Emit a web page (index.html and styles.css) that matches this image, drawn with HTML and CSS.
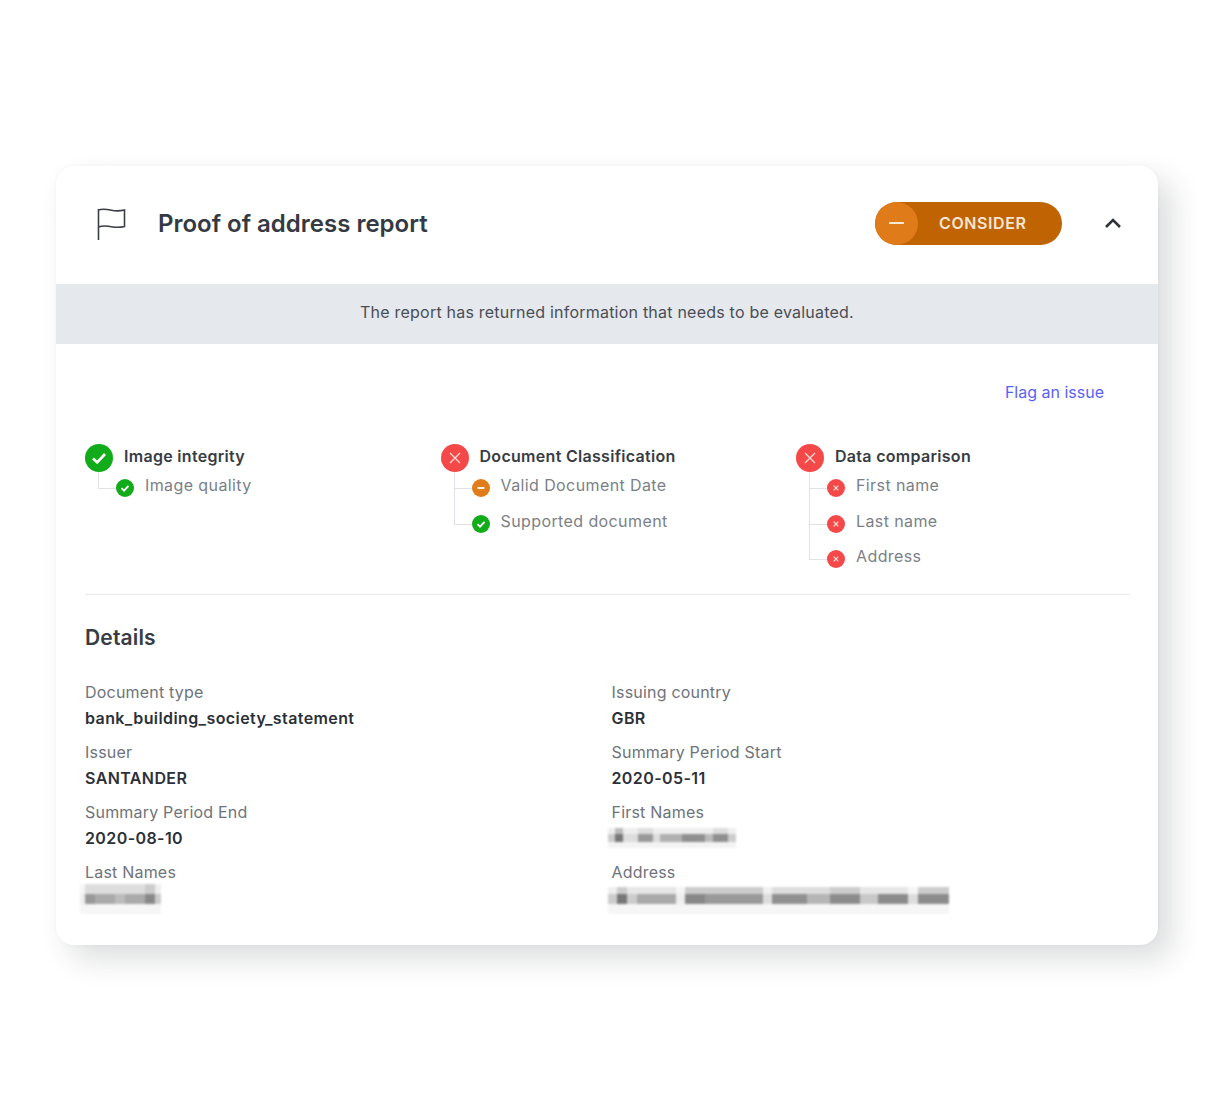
FILE: index.html
```html
<!DOCTYPE html>
<html lang="en">
<head>
<meta charset="utf-8">
<title>Proof of address report</title>
<link rel="stylesheet" href="styles.css">
</head>
<body>
<main class="card">
  <header class="card-header">
    <svg class="flag" viewBox="0 0 30 32" aria-hidden="true"><path d="M1.5 1v31M1.5 2c4-1.4 8-.8 13 .3 4 .8 8 .8 13-.3v16.500c-5 1.200-9 1-13 .2-5-1-9-1.300-13 .3"/></svg>
    <h1 class="title">Proof of address report</h1>
    <div class="status">
      <span class="status-knob"><span class="status-dash"></span></span>
      <span class="status-text">CONSIDER</span>
    </div>
    <svg class="chevron" viewBox="0 0 18 12" aria-hidden="true"><path d="M2 10l7-7 7 7"/></svg>
  </header>
  <div class="banner">The report has returned information that needs to be evaluated.</div>
  <section class="body">
    <div class="flag-row"><a class="flag-link">Flag an issue</a></div>
    <div class="checks">
      <div class="check">
        <div class="check-head">
          <svg class="icon-lg" viewBox="0 0 28 28"><circle class="fill-green" cx="14" cy="14" r="14"/><path class="mark-bold" d="M8 14.500l4.200 4L20 10"/></svg>
          <span class="check-title">Image integrity</span>
        </div>
        <ul class="sub-list">
          <li class="sub"><svg class="icon-sm" viewBox="0 0 18 18"><circle class="fill-green" cx="9" cy="9" r="9"/><path class="mark" d="M5.500 9.200l2.500 2.400 4.500-4.800"/></svg><span>Image quality</span></li>
        </ul>
      </div>
      <div class="check">
        <div class="check-head">
          <svg class="icon-lg" viewBox="0 0 28 28"><circle class="fill-red" cx="14" cy="14" r="14"/><path class="mark-thin" d="M9 9l10 10M19 9L9 19"/></svg>
          <span class="check-title">Document Classification</span>
        </div>
        <ul class="sub-list">
          <li class="sub"><svg class="icon-sm" viewBox="0 0 18 18"><circle class="fill-orange" cx="9" cy="9" r="9"/><path class="mark" d="M5.500 9h7"/></svg><span>Valid Document Date</span></li>
          <li class="sub"><svg class="icon-sm" viewBox="0 0 18 18"><circle class="fill-green" cx="9" cy="9" r="9"/><path class="mark" d="M5.500 9.200l2.500 2.400 4.500-4.800"/></svg><span>Supported document</span></li>
        </ul>
      </div>
      <div class="check">
        <div class="check-head">
          <svg class="icon-lg" viewBox="0 0 28 28"><circle class="fill-red" cx="14" cy="14" r="14"/><path class="mark-thin" d="M9 9l10 10M19 9L9 19"/></svg>
          <span class="check-title">Data comparison</span>
        </div>
        <ul class="sub-list">
          <li class="sub"><svg class="icon-sm" viewBox="0 0 18 18"><circle class="fill-red" cx="9" cy="9" r="9"/><path class="mark-x" d="M6.700 6.700l4.600 4.600M11.300 6.700l-4.600 4.600"/></svg><span>First name</span></li>
          <li class="sub"><svg class="icon-sm" viewBox="0 0 18 18"><circle class="fill-red" cx="9" cy="9" r="9"/><path class="mark-x" d="M6.700 6.700l4.600 4.600M11.300 6.700l-4.600 4.600"/></svg><span>Last name</span></li>
          <li class="sub"><svg class="icon-sm" viewBox="0 0 18 18"><circle class="fill-red" cx="9" cy="9" r="9"/><path class="mark-x" d="M6.700 6.700l4.600 4.600M11.300 6.700l-4.600 4.600"/></svg><span>Address</span></li>
        </ul>
      </div>
    </div>
    <h2 class="details-title">Details</h2>
    <dl class="details">
      <div class="field"><dt>Document type</dt><dd>bank_building_society_statement</dd></div>
      <div class="field"><dt>Issuing country</dt><dd>GBR</dd></div>
      <div class="field"><dt>Issuer</dt><dd>SANTANDER</dd></div>
      <div class="field"><dt>Summary Period Start</dt><dd>2020-05-11</dd></div>
      <div class="field"><dt>Summary Period End</dt><dd>2020-08-10</dd></div>
      <div class="field"><dt>First Names</dt><dd><div class="mosaic mosaic-first"></div></dd></div>
      <div class="field"><dt>Last Names</dt><dd><div class="mosaic mosaic-last"></div></dd></div>
      <div class="field"><dt>Address</dt><dd><div class="mosaic mosaic-address"></div></dd></div>
    </dl>
  </section>
</main>
</body>
</html>
```
FILE: styles.css
```css
* { box-sizing: border-box; }
html, body { margin: 0; background: #fff; }
body {
  height: 1110px;
  padding: 166px 56px 0;
  font-family: Inter, "Liberation Sans", sans-serif;
  overflow: hidden;
}
.card {
  width: 1102px;
  height: 779px;
  background: #fff;
  border-radius: 18px;
  box-shadow: 14px 14px 30px rgba(40, 44, 52, .16), 0 0 4px rgba(40, 44, 52, .04);
  overflow: hidden;
}
.card-header {
  height: 118px;
  display: flex;
  align-items: center;
  padding: 0 0 4px 41px;
}
.flag {
  width: 30px;
  height: 32px;
  flex: none;
  fill: none;
  stroke: #3a3f47;
  stroke-width: 1.600;
  margin-top: 1px;
}
.title {
  margin: 0 0 0 31px;
  font-size: 24px;
  font-weight: 600;
  color: #353a42;
  flex: 1;
}
.status {
  width: 187px;
  height: 43px;
  border-radius: 22px;
  background: #c06302;
  display: flex;
  align-items: center;
  overflow: hidden;
}
.status-knob {
  width: 43px;
  height: 43px;
  border-radius: 50%;
  background: #df7b19;
  display: flex;
  align-items: center;
  justify-content: center;
  flex: none;
}
.status-dash {
  width: 15px;
  height: 2px;
  background: #fbe9d6;
}
.status-text {
  margin-left: 21px;
  font-size: 16px;
  font-weight: 600;
  letter-spacing: .6px;
  color: #f6e5d4;
}
.chevron {
  width: 18px;
  height: 12px;
  margin: 0 36px 0 42px;
  fill: none;
  stroke: #2e323a;
  stroke-width: 2.600;
}
.banner {
  height: 60px;
  background: #e5e8ec;
  display: flex;
  align-items: center;
  justify-content: center;
  font-size: 16px;
  letter-spacing: .22px;
  color: #4a4e56;
  padding-bottom: 5px;
}
.body { padding: 0 28px 0 29px; }
.flag-row {
  display: flex;
  justify-content: flex-end;
  height: 100px;
  padding: 37px 26px 0 0;
}
.flag-link {
  font-size: 16px;
  line-height: 22px;
  color: #5a62f4;
}
.checks {
  display: grid;
  grid-template-columns: repeat(3, 355.500px);
  height: 151px;
  border-bottom: 1px solid #e6e8eb;
}
.check-head {
  display: flex;
  align-items: flex-start;
}
.icon-lg { width: 28px; height: 28px; flex: none; }
.check-title {
  margin-left: 11px;
  font-size: 16px;
  line-height: 24px;
  font-weight: 600;
  letter-spacing: .3px;
  color: #383c44;
}
.sub-list {
  list-style: none;
  margin: 0;
  padding: 0;
}
.sub {
  position: relative;
  height: 35.500px;
  padding-left: 60px;
  display: flex;
  font-size: 16px;
  line-height: 27px;
  letter-spacing: .4px;
  color: #7b7f87;
}
.sub .icon-sm {
  position: absolute;
  left: 31px;
  top: 7px;
}
.sub::before {
  content: "";
  position: absolute;
  left: 13px;
  top: -19px;
  width: 20px;
  height: 35px;
  border-left: 1.500px solid #dfe1e6;
  border-bottom: 1.500px solid #dfe1e6;
}
.sub:first-child::before { top: 0; height: 16px; }
.icon-sm { width: 18px; height: 18px; }
.fill-green { fill: #12ab1a; }
.fill-red { fill: #f54848; }
.fill-orange { fill: #e07c19; }
.mark-bold, .mark, .mark-thin, .mark-x {
  fill: none;
  stroke: #fff;
}
.mark-bold { stroke-width: 2.600; }
.mark { stroke-width: 1.800; }
.mark-thin { stroke-width: 1.200; stroke: #fde3dc; }
.mark-x { stroke-width: 1.200; stroke: #fde3dc; }
.details-title {
  margin: 30px 0 0;
  font-size: 21px;
  line-height: 26px;
  font-weight: 600;
  letter-spacing: .15px;
  color: #383c44;
}
.details {
  margin: 28px 0 0;
  display: grid;
  grid-template-columns: 526.500px 1fr;
  grid-auto-rows: 60px;
}
.field { min-width: 0; }
.field dt {
  font-size: 16px;
  line-height: 26px;
  letter-spacing: .2px;
  color: #6f737b;
}
.field dd {
  margin: 0;
  font-size: 16px;
  line-height: 26px;
  font-weight: 600;
  letter-spacing: .4px;
  color: #2c3038;
}
.mosaic { background-repeat: no-repeat; filter: blur(1px); }
.mosaic-first {
  width: 128px;
  height: 20px;
  margin: 3px 0 0 -4px;
  background-image:
    linear-gradient(#0000 0 6px, #0000 6px 14px, #f3f3f3 14px),
    linear-gradient(90deg, #ccc 0 7px, #777 7px 15px, #ddd 15px 30px, #999 30px 45px, #ddd 45px 52px, #b0b0b0 52px 74px, #8f8f8f 74px 97px, #bbb 97px 105px, #8f8f8f 105px 120px, #ccc 120px),
    linear-gradient(90deg, #eee 0 7px, #bbb 7px 15px, #eee 15px 30px, #ddd 30px 45px, #eee 45px 105px, #ddd 105px 120px, #eee 120px);
  background-size: 100% 100%, 100% 8px, 100% 6px;
  background-position: 0 0, 0 6px, 0 0;
}
.mosaic-last {
  width: 81px;
  height: 30px;
  margin: -1px 0 0 -5px;
  background-image:
    linear-gradient(#0000 0 20px, #f6f6f6 20px),
    linear-gradient(90deg, #eee 0 5px, #999 5px 15px, #aaa 15px 35px, #bbb 35px 45px, #aaa 45px 65px, #888 65px 75px, #ccc 75px),
    linear-gradient(90deg, #f6f6f6 0 5px, #ddd 5px 65px, #ccc 65px 75px, #eee 75px);
  background-size: 100% 100%, 100% 10px, 100% 10px;
  background-position: 0 0, 0 10px, 0 0;
}
.mosaic-address {
  width: 341px;
  height: 27px;
  margin: 2px 0 0 -4px;
  background-image:
    linear-gradient(#0000 0 17px, #f6f6f6 17px),
    linear-gradient(90deg, #ccc 0 9px, #777 9px 19px, #ccc 19px 29px, #aaa 29px 68px, #eee 68px 77px, #888 77px 97px, #999 97px 155px, #ddd 155px 164px, #909090 164px 199px, #b5b5b5 199px 222px, #8c8c8c 222px 252px, #c8c8c8 252px 270px, #8c8c8c 270px 300px, #ddd 300px 310px, #8c8c8c 310px),
    linear-gradient(90deg, #eee 0 9px, #ccc 9px 19px, #e6e6e6 19px 68px, #f5f5f5 68px 77px, #ccc 77px 155px, #f0f0f0 155px 164px, #ddd 164px 222px, #ccc 222px 252px, #e6e6e6 252px 300px, #f5f5f5 300px 310px, #ccc 310px);
  background-size: 100% 100%, 100% 10px, 100% 7px;
  background-position: 0 0, 0 7px, 0 0;
}
```
